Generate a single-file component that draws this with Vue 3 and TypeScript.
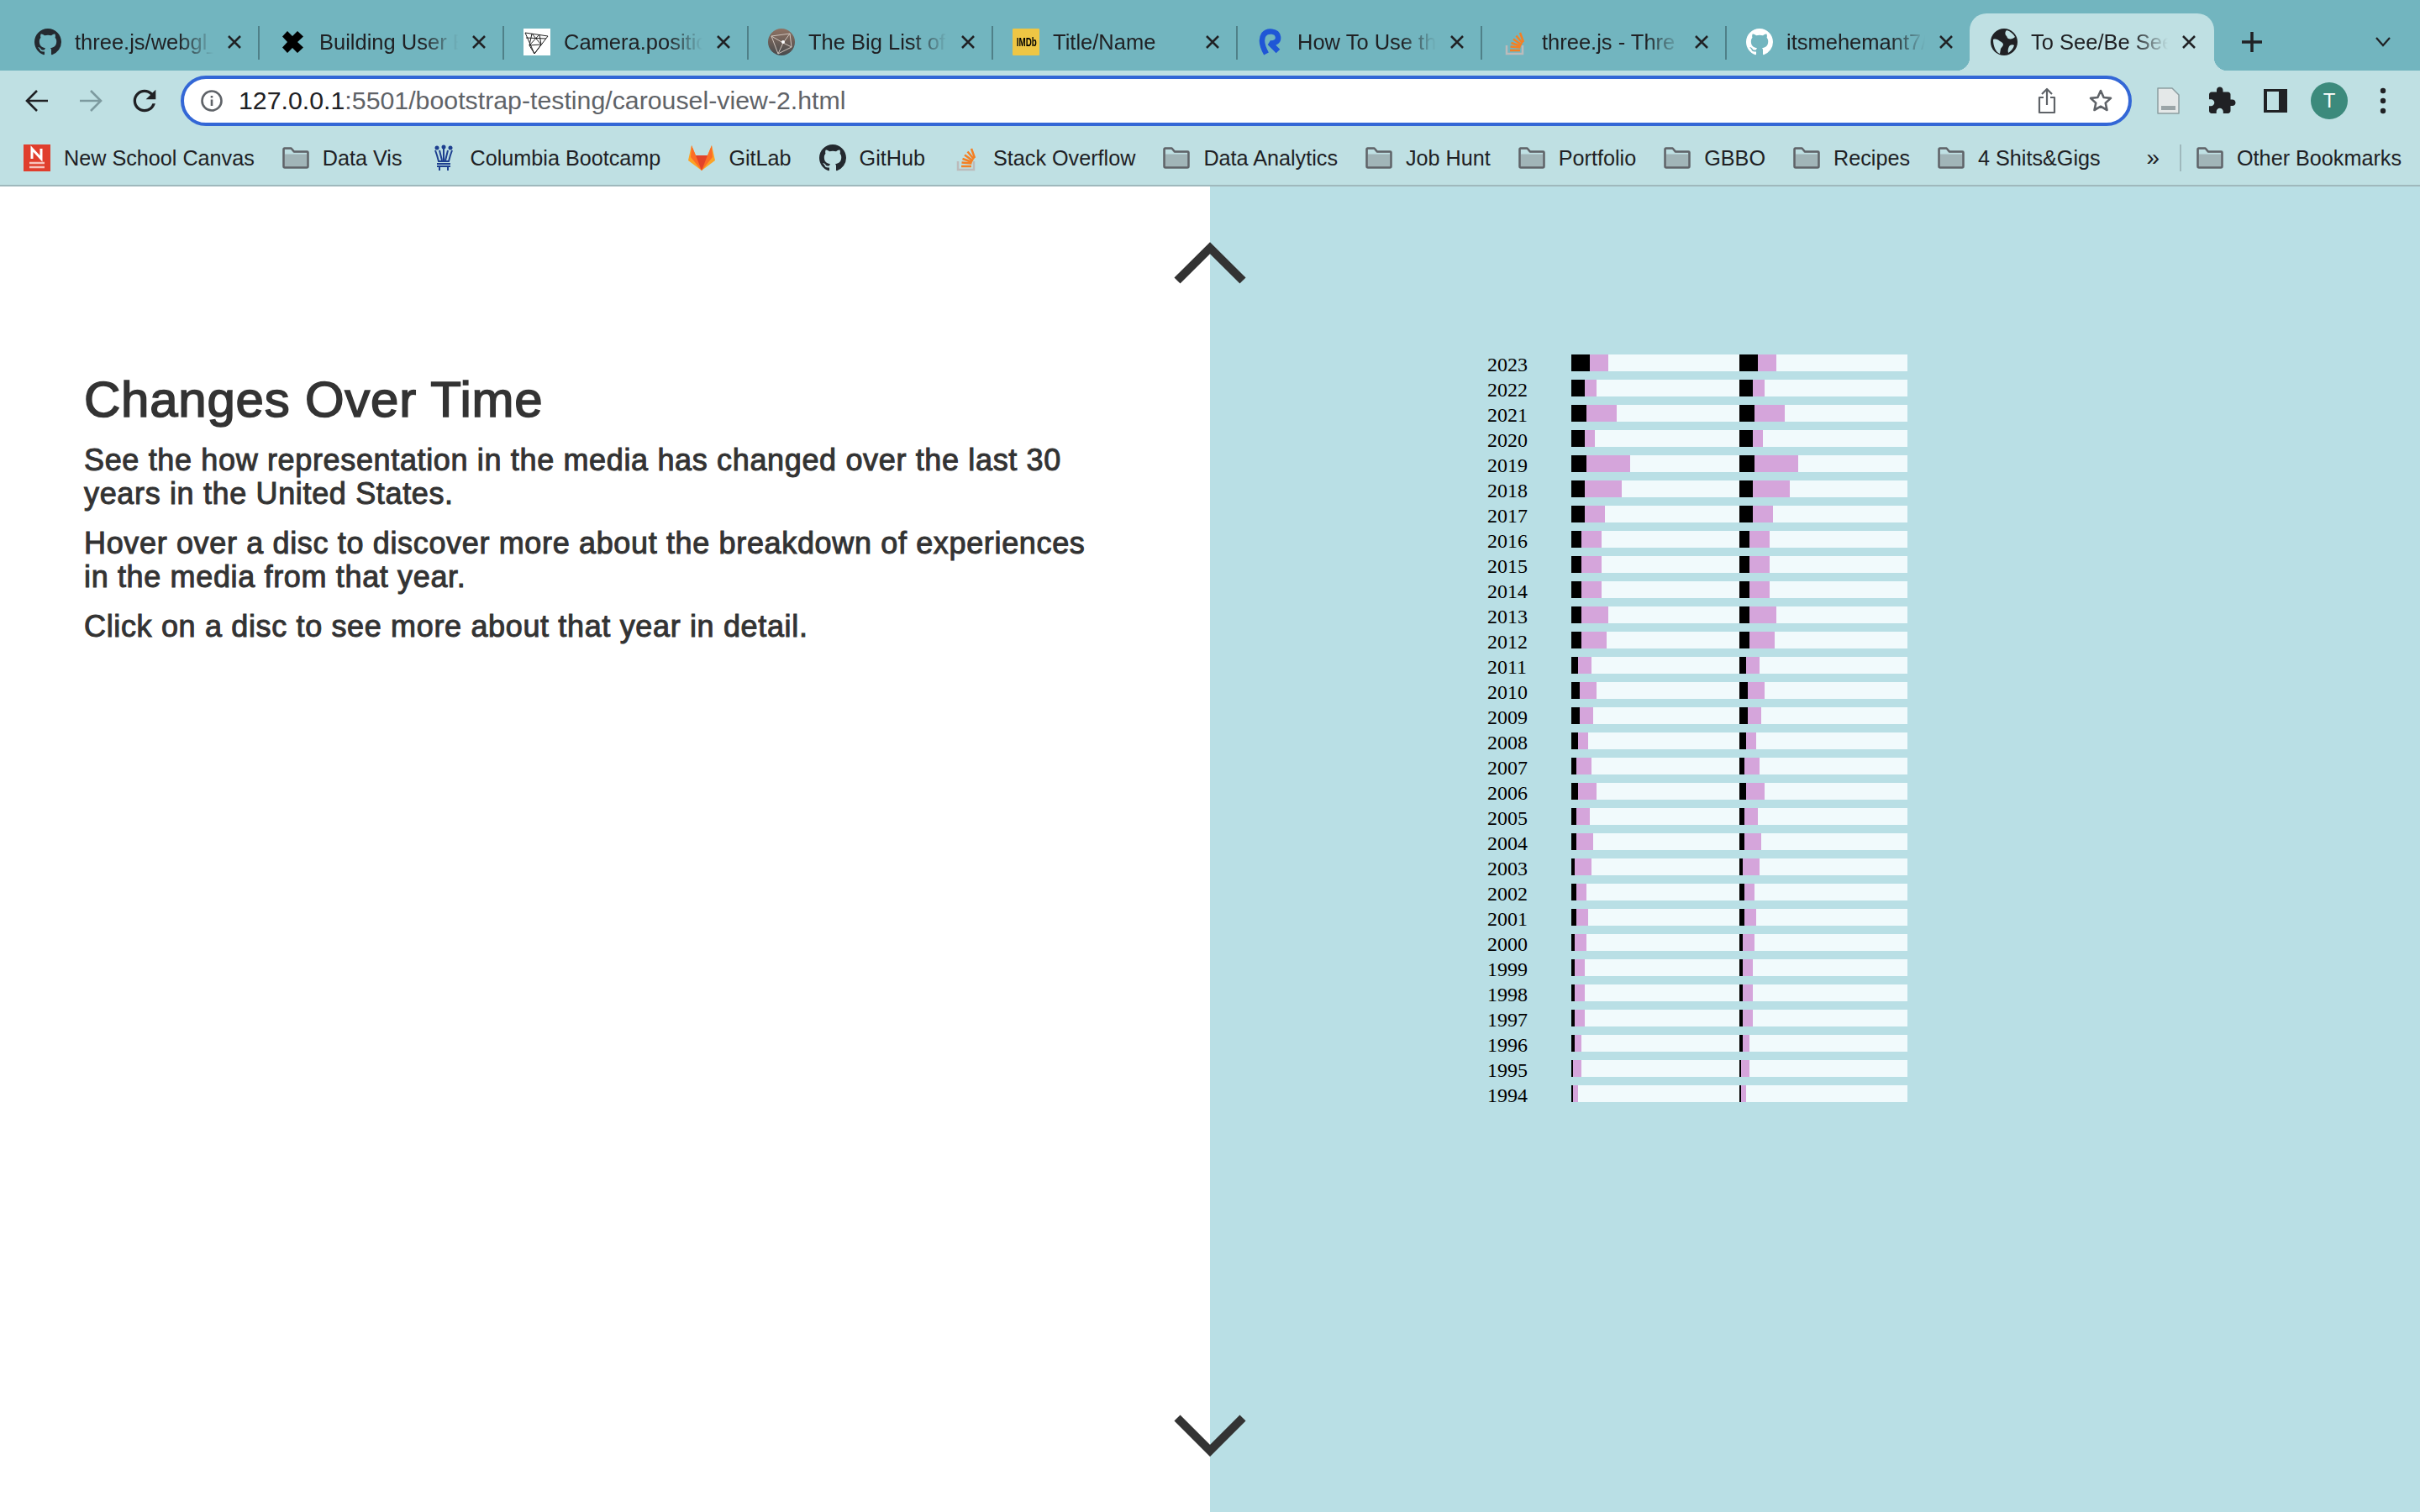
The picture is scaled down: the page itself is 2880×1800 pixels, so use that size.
<script setup lang="ts">
interface Tab {
  title: string
  icon: string
  active?: boolean
}

interface Bookmark {
  label: string
  icon: string
}

const tabs: Tab[] = [
  { title: 'three.js/webgl_', icon: 'github' },
  { title: 'Building User E', icon: 'cross' },
  { title: 'Camera.positio', icon: 'mesh' },
  { title: 'The Big List of', icon: 'disc' },
  { title: 'Title/Name', icon: 'imdb' },
  { title: 'How To Use th', icon: 'letter-r' },
  { title: 'three.js - Thre', icon: 'stack' },
  { title: 'itsmehemant7/', icon: 'github-white' },
  { title: 'To See/Be See', icon: 'globe', active: true },
]

const bookmarks: Bookmark[] = [
  { label: 'New School Canvas', icon: 'canvas' },
  { label: 'Data Vis', icon: 'folder' },
  { label: 'Columbia Bootcamp', icon: 'crown' },
  { label: 'GitLab', icon: 'gitlab' },
  { label: 'GitHub', icon: 'github' },
  { label: 'Stack Overflow', icon: 'stack' },
  { label: 'Data Analytics', icon: 'folder' },
  { label: 'Job Hunt', icon: 'folder' },
  { label: 'Portfolio', icon: 'folder' },
  { label: 'GBBO', icon: 'folder' },
  { label: 'Recipes', icon: 'folder' },
  { label: '4 Shits&Gigs', icon: 'folder' },
]

// year, black segment, end of the pink segment
const rows: [number, number, number][] = [
  [2023, 22, 44], [2022, 16, 30], [2021, 18, 54], [2020, 16, 28], [2019, 18, 70],
  [2018, 16, 60], [2017, 16, 40], [2016, 12, 36], [2015, 12, 36], [2014, 12, 36],
  [2013, 12, 44], [2012, 12, 42], [2011, 8, 24], [2010, 10, 30], [2009, 10, 26],
  [2008, 8, 20], [2007, 6, 24], [2006, 8, 30], [2005, 6, 22], [2004, 6, 26],
  [2003, 4, 24], [2002, 6, 18], [2001, 6, 20], [2000, 4, 18], [1999, 4, 16],
  [1998, 4, 16], [1997, 4, 16], [1996, 4, 12], [1995, 2, 12], [1994, 2, 8],
]
</script>

<template>
  <div class="window">
    <svg class="sprite" aria-hidden="true">
      <defs>
        <linearGradient id="disc-fill" x1="0" y1="0" x2="0" y2="1">
          <stop offset="0" stop-color="#8f7263" />
          <stop offset="1" stop-color="#474a4c" />
        </linearGradient>
      </defs>
      <symbol id="github" viewBox="0 0 16 16">
        <path fill="#24292f" d="M8 0C3.58 0 0 3.58 0 8c0 3.54 2.29 6.53 5.47 7.59.4.07.55-.17.55-.38 0-.19-.01-.82-.01-1.49-2.01.37-2.53-.49-2.69-.94-.09-.23-.48-.94-.82-1.13-.28-.15-.68-.52-.01-.53.63-.01 1.08.58 1.23.82.72 1.21 1.87.87 2.33.66.07-.52.28-.87.51-1.07-1.78-.2-3.64-.89-3.64-3.95 0-.87.31-1.59.82-2.15-.08-.2-.36-1.02.08-2.12 0 0 .67-.21 2.2.82.64-.18 1.32-.27 2-.27.68 0 1.36.09 2 .27 1.53-1.04 2.2-.82 2.2-.82.44 1.1.16 1.92.08 2.12.51.56.82 1.27.82 2.15 0 3.07-1.87 3.75-3.65 3.95.29.25.54.73.54 1.48 0 1.07-.01 1.93-.01 2.2 0 .21.15.46.55.38A8.013 8.013 0 0016 8c0-4.42-3.58-8-8-8z" />
      </symbol>
      <symbol id="github-white" viewBox="0 0 16 16">
        <path fill="#fff" d="M8 0C3.58 0 0 3.58 0 8c0 3.54 2.29 6.53 5.47 7.59.4.07.55-.17.55-.38 0-.19-.01-.82-.01-1.49-2.01.37-2.53-.49-2.69-.94-.09-.23-.48-.94-.82-1.13-.28-.15-.68-.52-.01-.53.63-.01 1.08.58 1.23.82.72 1.21 1.87.87 2.33.66.07-.52.28-.87.51-1.07-1.78-.2-3.64-.89-3.64-3.95 0-.87.31-1.59.82-2.15-.08-.2-.36-1.02.08-2.12 0 0 .67-.21 2.2.82.64-.18 1.32-.27 2-.27.68 0 1.36.09 2 .27 1.53-1.04 2.2-.82 2.2-.82.44 1.1.16 1.92.08 2.12.51.56.82 1.27.82 2.15 0 3.07-1.87 3.75-3.65 3.95.29.25.54.73.54 1.48 0 1.07-.01 1.93-.01 2.2 0 .21.15.46.55.38A8.013 8.013 0 0016 8c0-4.42-3.58-8-8-8z" />
      </symbol>
      <symbol id="cross" viewBox="0 0 32 32">
        <path fill="#000" d="M10 3l6 6 6-6 7 6.500-7 6.500 7 6.500-7 6.500-6-6-6 6-6-6.500L10 16 4 9.500z" />
      </symbol>
      <symbol id="mesh" viewBox="0 0 32 32">
        <rect width="32" height="32" fill="#fff" />
        <path fill="none" stroke="#222" stroke-width="1" d="M2 5l27 4-16 21zM10 6l-3 14M19 7L7 20l14-1M19 7l2 12M10 6l11 13M3 11l24 1M7 20l6 10M21 19l-8 11" />
      </symbol>
      <symbol id="disc" viewBox="0 0 32 32">
        <circle cx="16" cy="16" r="16" fill="url(#disc-fill)" />
        <path fill="none" stroke="#cfc4bc" stroke-width="1" d="M4 9l22-3 2 16-16 8zM4 9l14 8 8-11M18 17l-6 13M18 17l10 5" />
        <circle cx="18" cy="16" r="2" fill="#fff" />
      </symbol>
      <symbol id="imdb" viewBox="0 0 32 32">
        <rect width="32" height="32" rx="1" fill="#eec644" />
      </symbol>
      <symbol id="letter-r" viewBox="0 0 28 32">
        <path fill="none" stroke="#1f56d6" stroke-width="6.500" d="M9 30C4 21 2 13 6 7c4-5 16-5 17 3 1 7-7 8-10 7l10 10" />
      </symbol>
      <symbol id="stack" viewBox="0 0 32 32">
        <path fill="none" stroke="#bcbbbb" stroke-width="2.500" d="M6 20v10h19V20" />
        <path fill="none" stroke="#f48024" stroke-width="2.500" d="M10 26h12M10.500 21.500l12 1M11.500 17l11.500 4M14 12.500l10 7M17.500 8.500l7.500 9M22 5l4 11" />
      </symbol>
      <symbol id="globe" viewBox="0 0 32 32">
        <circle cx="16" cy="16" r="16" fill="#202124" />
        <path fill="#bfe0e3" d="M19 2c4 1 8 4 10 8-2 2-5 3-8 2-2-1-1-3-3-4-1-2-1-4 1-6zM3 13c3-1 6 0 8 2 2 1 4 2 4 4 0 2-2 3-3 5l-1 6C6 28 3 21 3 13zM23 20c2-1 4-1 5 0-1 4-4 7-7 9-1-3 0-7 2-9z" />
      </symbol>
      <symbol id="folder" viewBox="0 0 32 26">
        <path fill="#a1b5b8" stroke="#5f6368" stroke-width="2.500" stroke-linejoin="round" d="M1.500 2.500a1 1 0 011-1h8l3.500 4h15.500a1 1 0 011 1v16.500a1.500 1.500 0 01-1.500 1.500H3a1.500 1.500 0 01-1.500-1.500z" />
        <path fill="#bfe0e3" d="M3 3h7l3 4h16v1.500H3z" />
      </symbol>
      <symbol id="canvas" viewBox="0 0 32 32">
        <rect width="32" height="32" fill="#e03e2d" />
        <path fill="none" stroke="#fff" stroke-width="3" d="M10 17V5l11 12V5" />
        <path fill="none" stroke="#f7c3bc" stroke-width="2.500" d="M7 22h18M7 27h18" />
      </symbol>
      <symbol id="crown" viewBox="0 0 24 32">
        <g fill="none" stroke="#1d3f8f" stroke-width="2">
          <path d="M2 7c2 5 3 9 4 13h12c1-4 2-8 4-13M12 4v16M7 7l3 12M17 7l-3 12M4 23h16M4 26h16M7 26v5M17 26v5" />
        </g>
        <circle cx="4" cy="4" r="2.500" fill="#1d3f8f" />
        <circle cx="12" cy="3" r="2.500" fill="#1d3f8f" />
        <circle cx="20" cy="4" r="2.500" fill="#1d3f8f" />
      </symbol>
      <symbol id="gitlab" viewBox="0 0 32 32">
        <path fill="#fca326" d="M0 19L4 1l5 12h14l5-12 4 18-16 12z" />
        <path fill="#fc6d26" d="M4 1l5 12h14l5-12 1 14-13 16L3 15z" />
        <path fill="#e24329" d="M9 13h14l-7 18z" />
      </symbol>
      <symbol id="refresh" viewBox="0 0 24 24">
        <path fill="#202124" d="M17.650 6.350A7.958 7.958 0 0012 4c-4.420 0-7.990 3.580-7.990 8s3.570 8 7.990 8c3.730 0 6.840-2.550 7.730-6h-2.080A5.990 5.990 0 0112 18c-3.310 0-6-2.690-6-6s2.690-6 6-6c1.660 0 3.140.690 4.220 1.780L13 11h7V4l-2.350 2.350z" />
      </symbol>
      <symbol id="extension" viewBox="0 0 24 24">
        <path fill="#202124" d="M20.500 11H19V7c0-1.100-.9-2-2-2h-4V3.500C13 2.120 11.880 1 10.500 1S8 2.120 8 3.500V5H4c-1.100 0-1.990.9-1.990 2v3.800H3.500c1.490 0 2.700 1.210 2.700 2.700s-1.210 2.700-2.700 2.700H2V20c0 1.100.9 2 2 2h3.800v-1.500c0-1.490 1.210-2.700 2.700-2.700 1.490 0 2.700 1.210 2.700 2.700V22H17c1.100 0 2-.9 2-2v-4h1.500c1.380 0 2.500-1.120 2.500-2.500S21.880 11 20.500 11z" />
      </symbol>
    </svg>

    <header class="chrome">
      <div class="tabstrip">
        <div
          v-for="tab in tabs"
          :key="tab.title"
          class="tab"
          :class="{ 'tab--active': tab.active }"
        >
          <span class="tab__icon">
            <svg width="32" height="32"><use :href="`#${tab.icon}`" /></svg>
            <span v-if="tab.icon === 'imdb'" class="tab__imdb">IMDb</span>
          </span>
          <span class="tab__title">{{ tab.title }}</span>
          <svg class="tab__close" width="18" height="18" viewBox="0 0 18 18">
            <path d="M2 2l14 14M16 2L2 16" stroke="#202124" stroke-width="2.500" fill="none" />
          </svg>
        </div>
        <svg class="new-tab" width="26" height="26" viewBox="0 0 26 26">
          <path d="M13 1v24M1 13h24" stroke="#202124" stroke-width="3.500" fill="none" />
        </svg>
        <svg class="tab-list" width="18" height="12" viewBox="0 0 18 12">
          <path d="M1 1l8 9 8-9" stroke="#202124" stroke-width="2.200" fill="none" />
        </svg>
      </div>

      <div class="toolbar">
        <button class="tool">
          <svg width="28" height="28" viewBox="0 0 28 28">
            <path d="M27 14H3M14 2L2 14l12 12" stroke="#202124" stroke-width="2.600" fill="none" />
          </svg>
        </button>
        <button class="tool">
          <svg width="28" height="28" viewBox="0 0 28 28">
            <path d="M1 14h24M14 2l12 12-12 12" stroke="#7d9a9f" stroke-width="2.600" fill="none" />
          </svg>
        </button>
        <button class="tool">
          <svg width="40" height="40"><use href="#refresh" /></svg>
        </button>

        <div class="omnibox">
          <span class="omnibox__btn">
            <svg width="28" height="28" viewBox="0 0 28 28">
              <circle cx="14" cy="14" r="11.500" stroke="#5f6368" stroke-width="2.600" fill="none" />
              <path d="M14 12.500V20M14 8v2.600" stroke="#5f6368" stroke-width="2.600" fill="none" />
            </svg>
          </span>
          <span class="omnibox__url"><span class="omnibox__host">127.0.0.1</span>:5501/bootstrap-testing/carousel-view-2.html</span>
          <span class="omnibox__btn">
            <svg width="24" height="32" viewBox="0 0 24 32">
              <path d="M12 21V2M6 8l6-6 6 6M8 12H3v18h18V12h-5" stroke="#5f6368" stroke-width="2.200" fill="none" stroke-linejoin="round" />
            </svg>
          </span>
          <span class="omnibox__btn">
            <svg width="30" height="30" viewBox="0 0 30 30">
              <path d="M15 3l3.600 8 8.400.9-6.300 5.700 1.800 8.400L15 21.700 7.500 26l1.800-8.400L3 11.900l8.400-.9z" stroke="#5f6368" stroke-width="2.600" fill="none" stroke-linejoin="round" />
            </svg>
          </span>
        </div>

        <div class="tools-right">
          <button class="tool">
            <svg width="28" height="32" viewBox="0 0 28 32">
              <path d="M2 1h17l8 8v22H2z" fill="#e4e8e8" stroke="#8c9da0" stroke-width="1.500" stroke-linejoin="round" />
              <path d="M6 22h17v5H6z" fill="#9aa5a7" />
            </svg>
          </button>
          <button class="tool">
            <svg width="36" height="36"><use href="#extension" /></svg>
          </button>
          <button class="tool">
            <svg width="28" height="28" viewBox="0 0 28 28">
              <path d="M0 0h28v28H0z" fill="#202124" />
              <path d="M4 3h14v22H4z" fill="#bfe0e3" />
            </svg>
          </button>
          <button class="tool">
            <span class="avatar">T</span>
          </button>
          <button class="tool">
            <svg width="8" height="32" viewBox="0 0 8 32">
              <circle cx="4" cy="4" r="3.200" fill="#202124" />
              <circle cx="4" cy="16" r="3.200" fill="#202124" />
              <circle cx="4" cy="28" r="3.200" fill="#202124" />
            </svg>
          </button>
        </div>
      </div>

      <div class="bookmarks">
        <span v-for="mark in bookmarks" :key="mark.label" class="bookmark">
          <svg v-if="mark.icon === 'folder'" width="32" height="26"><use href="#folder" /></svg>
          <svg v-else width="32" height="32"><use :href="`#${mark.icon}`" /></svg>
          {{ mark.label }}
        </span>
        <span class="bookmarks__more">»</span>
        <span class="bookmarks__sep"></span>
        <span class="bookmark">
          <svg width="32" height="26"><use href="#folder" /></svg>
          Other Bookmarks
        </span>
      </div>
    </header>

    <main class="page">
      <section class="intro">
        <h1>Changes Over Time</h1>
        <p>See the how representation in the media has changed over the last 30 years in the United States.</p>
        <p>Hover over a disc to discover more about the breakdown of experiences in the media from that year.</p>
        <p>Click on a disc to see more about that year in detail.</p>
      </section>

      <section class="viz">
        <div v-for="[year, black, total] in rows" :key="year" class="row">
          <span class="row__year">{{ year }}</span>
          <div v-for="col in 2" :key="col" class="track">
            <i class="seg seg--black" :style="{ width: black + 'px' }"></i>
            <i class="seg seg--pink" :style="{ width: total - black + 'px' }"></i>
          </div>
        </div>
      </section>

      <svg class="arrow arrow--up" width="92" height="52" viewBox="0 0 92 52">
        <path d="M7 46L46 7.300 85 46" stroke="#333" stroke-width="10" fill="none" />
      </svg>
      <svg class="arrow arrow--down" width="92" height="52" viewBox="0 0 92 52">
        <path d="M7 6l39 39 39-39" stroke="#333" stroke-width="10" fill="none" />
      </svg>
    </main>
  </div>
</template>

<style scoped>
.window {
  width: 2880px;
  height: 1800px;
  display: flex;
  flex-direction: column;
  overflow: hidden;
  font-family: "Liberation Sans", Arial, sans-serif;
  color: #202124;
}

.sprite {
  position: absolute;
  width: 0;
  height: 0;
}

.chrome {
  background: #bfe0e3;
  flex: none;
}

.tabstrip {
  height: 84px;
  background: #72b5bf;
  display: flex;
  align-items: flex-end;
  padding-left: 18px;
  position: relative;
}

.tab {
  width: 291px;
  height: 68px;
  flex: none;
  display: flex;
  align-items: center;
  padding: 0 21px 0 23px;
  box-sizing: border-box;
  position: relative;
  font-size: 25.500px;
}

.tab::after {
  content: "";
  position: absolute;
  right: 0;
  top: 15px;
  width: 2px;
  height: 40px;
  background: #4f8088;
}

.tab:nth-last-of-type(2)::after,
.tab--active::after {
  display: none;
}

.tab--active {
  background: #bfe0e3;
  border-radius: 20px 20px 0 0;
  margin-left: -2px;
  padding-left: 25px;
}

.tab--active::before {
  content: "";
  position: absolute;
  left: -16px;
  right: -16px;
  bottom: 0;
  height: 16px;
  background:
    radial-gradient(circle at 0 0, #72b5bf 16px, #bfe0e3 16.500px) left / 16px 16px no-repeat,
    radial-gradient(circle at 100% 0, #72b5bf 16px, #bfe0e3 16.500px) right / 16px 16px no-repeat;
}

.tab__icon {
  width: 32px;
  height: 32px;
  flex: none;
  margin-right: 16px;
  position: relative;
}

.tab__icon svg {
  display: block;
}

.tab__imdb {
  position: absolute;
  left: 0;
  right: 0;
  top: 8px;
  text-align: center;
  font-size: 14px;
  line-height: 16px;
  font-weight: 700;
  color: #000;
  transform: scaleX(0.7);
}

.tab__title {
  flex: 1;
  min-width: 0;
  overflow: hidden;
  white-space: nowrap;
  -webkit-mask-image: linear-gradient(to right, #000 75%, transparent 100%);
  mask-image: linear-gradient(to right, #000 75%, transparent 100%);
}

.tab__close {
  flex: none;
  margin-left: 16px;
}

.new-tab {
  position: absolute;
  left: 2667px;
  top: 37px;
}

.tab-list {
  position: absolute;
  left: 2827px;
  top: 44px;
}

.toolbar {
  height: 72px;
  display: flex;
  align-items: center;
  padding-left: 12px;
}

.tool {
  width: 64px;
  height: 64px;
  flex: none;
  border: 0;
  padding: 0;
  background: none;
  display: flex;
  align-items: center;
  justify-content: center;
}

.omnibox {
  width: 2322px;
  height: 60px;
  margin-left: 11px;
  flex: none;
  box-sizing: border-box;
  border: 4px solid #3367d6;
  border-radius: 30px;
  background: #fff;
  display: flex;
  align-items: center;
  padding: 0 1px;
}

.omnibox__btn {
  width: 64px;
  flex: none;
  display: flex;
  align-items: center;
  justify-content: center;
}

.omnibox__url {
  flex: 1;
  font-size: 30.300px;
  color: #5f6368;
  white-space: nowrap;
}

.omnibox__host {
  color: #202124;
}

.tools-right {
  display: flex;
  margin-left: 11px;
}

.avatar {
  width: 44px;
  height: 44px;
  border-radius: 50%;
  background: #3c8a7c;
  color: #fff;
  font-size: 24px;
  line-height: 44px;
  text-align: center;
}

.bookmarks {
  height: 64px;
  border-bottom: 2px solid #9fb8bc;
  display: flex;
  align-items: center;
  gap: 33px;
  padding: 0 22px 0 28px;
  font-size: 25.200px;
}

.bookmark {
  display: flex;
  align-items: center;
  gap: 16px;
  white-space: nowrap;
}

.bookmark svg {
  flex: none;
  display: block;
}

.bookmarks__more {
  margin-left: auto;
  font-size: 28px;
}

.bookmarks__sep {
  width: 2px;
  height: 32px;
  background: #9fb8bc;
  margin: 0 -15px 0 -9px;
}

.page {
  flex: 1;
  display: flex;
  position: relative;
}

.intro {
  width: 1440px;
  box-sizing: border-box;
  padding: 218px 120px 0 100px;
  background: #fff;
  color: #333;
}

.intro h1 {
  margin: 0 0 16px;
  font-size: 60px;
  line-height: 72px;
  font-weight: 400;
  letter-spacing: 0.760px;
  -webkit-text-stroke: 1.600px #333;
}

.intro p {
  margin: 0 0 19px;
  font-size: 36px;
  line-height: 40px;
  letter-spacing: 0.650px;
  -webkit-text-stroke: 1px #333;
}

.viz {
  width: 1440px;
  box-sizing: border-box;
  background: #b9dfe5;
  padding: 200px 0 0 330px;
  display: flex;
  flex-direction: column;
  gap: 10px;
}

.row {
  display: flex;
  height: 20px;
}

.row__year {
  width: 100px;
  font-family: "Liberation Serif", "Times New Roman", serif;
  font-size: 24px;
  line-height: 20px;
  color: #000;
  position: relative;
  top: 2px;
}

.track {
  width: 200px;
  background: #f1fafc;
  display: flex;
}

.seg {
  display: block;
  height: 100%;
}

.seg--black {
  background: #000;
}

.seg--pink {
  background: #d5a5db;
}

.arrow {
  position: absolute;
  left: 1394px;
}

.arrow--up {
  top: 66px;
}

.arrow--down {
  bottom: 66px;
}
</style>

<style>
html,
body {
  margin: 0;
  padding: 0;
}
</style>
